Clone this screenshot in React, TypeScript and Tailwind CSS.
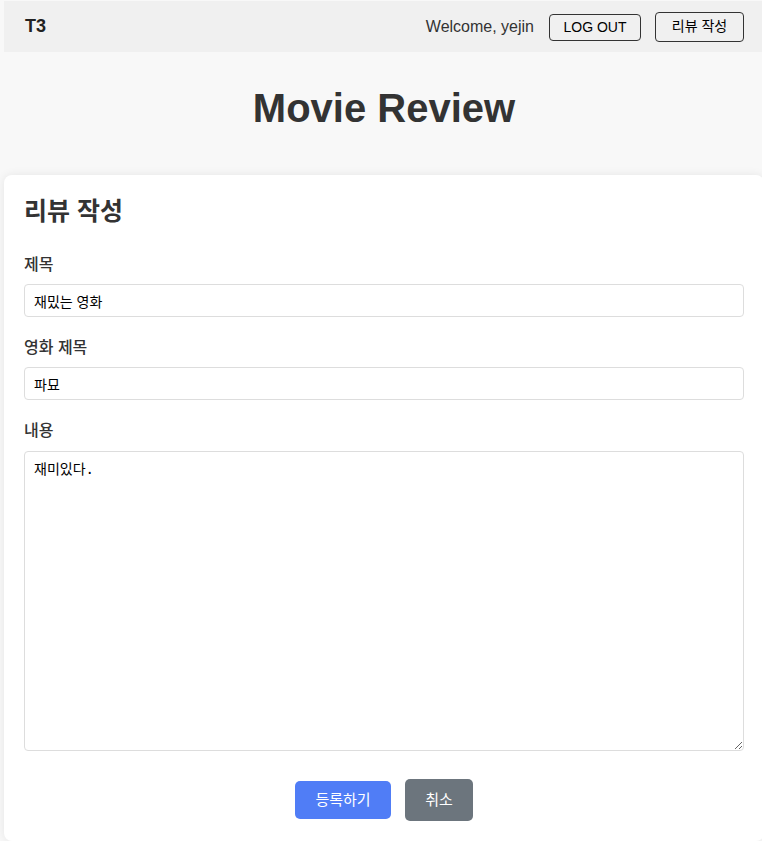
const font = "font-['Liberation_Sans','Noto_Sans_CJK_KR',sans-serif]";

function Field({ label, gap = "mb-2", children }: { label: string; gap?: string; children: React.ReactNode }) {
  return (
    <div className="mb-5">
      <label className={`${gap} block text-[16px] leading-[22px] font-medium text-[#333]`}>{label}</label>
      {children}
    </div>
  );
}

export default function App() {
  return (
    <div className={`h-[841px] w-[762px] overflow-hidden bg-[#f8f8f8] ${font}`}>
      <div className="ml-1 w-[760px] pt-px">
        <header className="flex h-[51px] items-center justify-between bg-[#f0f0f0] px-5">
          <span className="ml-px text-[18px] font-bold text-[#222]">T3</span>
          <div className="flex items-center">
            <span className="mr-[15px] text-[16px] text-[#333]">Welcome, yejin</span>
            <button className="mr-[14px] mt-[2px] h-[27px] w-[92px] rounded border border-[#333] text-[14px] text-black">
              LOG OUT
            </button>
            <button className="h-[30px] w-[89px] rounded border border-[#333] text-[14px] text-black">
              리뷰 작성
            </button>
          </div>
        </header>

        <section className="pb-[44px] pt-[34px] text-center">
          <h1 className="text-[40px] leading-[45px] font-bold text-[#333]">Movie Review</h1>
        </section>

        <main className="rounded-lg bg-white px-5 pb-5 pt-5 shadow-[0_0_10px_rgba(0,0,0,0.08)]">
          <h2 className="mb-[27px] text-[25px] leading-8 font-bold text-[#333]">리뷰 작성</h2>
          <Field label="제목">
            <input
              className="block h-[33px] w-full rounded border border-[#ddd] px-[9px] text-[14px] text-black outline-none"
              defaultValue="재밌는 영화"
            />
          </Field>
          <Field label="영화 제목">
            <input
              className="block h-[33px] w-full rounded border border-[#ddd] px-[9px] text-[14px] text-black outline-none"
              defaultValue="파묘"
            />
          </Field>
          <Field label="내용" gap="mb-[9px]">
            <textarea
              className="block h-[300px] w-full rounded border border-[#ddd] px-[9px] py-[7px] font-['DejaVu_Sans_Mono','Noto_Sans_CJK_KR',monospace] text-[14px] text-black outline-none"
              defaultValue="재미있다."
            />
          </Field>
          <div className="mt-[28px] flex items-center justify-center gap-[14px]">
            <button className="h-[38px] w-[96px] rounded-[5px] bg-[#507df6] text-[15px] text-white">등록하기</button>
            <button className="h-[42px] w-[68px] rounded-[5px] bg-[#6c757d] text-[15px] text-white">취소</button>
          </div>
        </main>
      </div>
    </div>
  );
}
